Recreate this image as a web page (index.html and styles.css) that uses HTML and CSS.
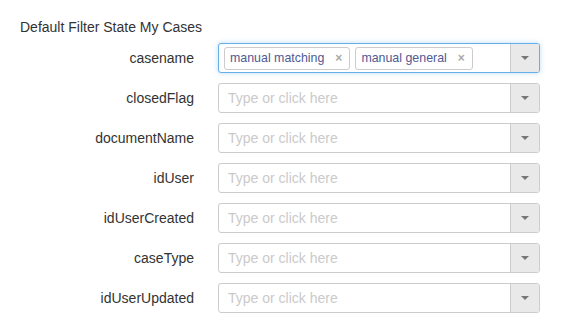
FILE: index.html
```
<!DOCTYPE html>
<html>
<head>
<meta charset="utf-8">
<link rel="stylesheet" href="styles.css">
</head>
<body>
<div class="page">
  <div class="title">Default Filter State My Cases</div>
  <div class="form">
    <div class="row">
      <label class="label">casename</label>
      <div class="select focused">
        <div class="field">
          <span class="tag">manual matching<span class="x">×</span></span>
          <span class="tag">manual general<span class="x">×</span></span>
        </div>
        <div class="btn"><span class="caret"></span></div>
      </div>
    </div>
    <div class="row">
      <label class="label">closedFlag</label>
      <div class="select"><div class="field"><span class="ph">Type or click here</span></div><div class="btn"><span class="caret"></span></div></div>
    </div>
    <div class="row">
      <label class="label">documentName</label>
      <div class="select"><div class="field"><span class="ph">Type or click here</span></div><div class="btn"><span class="caret"></span></div></div>
    </div>
    <div class="row">
      <label class="label">idUser</label>
      <div class="select"><div class="field"><span class="ph">Type or click here</span></div><div class="btn"><span class="caret"></span></div></div>
    </div>
    <div class="row">
      <label class="label">idUserCreated</label>
      <div class="select"><div class="field"><span class="ph">Type or click here</span></div><div class="btn"><span class="caret"></span></div></div>
    </div>
    <div class="row">
      <label class="label">caseType</label>
      <div class="select"><div class="field"><span class="ph">Type or click here</span></div><div class="btn"><span class="caret"></span></div></div>
    </div>
    <div class="row">
      <label class="label">idUserUpdated</label>
      <div class="select"><div class="field"><span class="ph">Type or click here</span></div><div class="btn"><span class="caret"></span></div></div>
    </div>
  </div>
</div>
</body>
</html>
```
FILE: styles.css
```
html, body { margin: 0; padding: 0; background: #fff; }
body { font-family: "Liberation Sans", Arial, sans-serif; color: #333; font-size: 14px; }
.page { padding: 17px 0 0 20px; }
.title { line-height: 20px; height: 20px; }
.form { margin-top: 6px; display: flex; flex-direction: column; gap: 10px; }
.row { display: flex; align-items: center; height: 30px; }
.label { width: 174px; text-align: right; margin-right: 24px; }
.select { width: 322px; height: 30px; box-sizing: border-box; border: 1px solid #ccc; border-radius: 3px; display: flex; background: #fff; }
.select.focused { border-color: #66afe9; box-shadow: 0 0 5px rgba(102,175,233,0.45); }
.field { flex: 1; display: flex; align-items: center; padding-left: 5px; gap: 5px; }
.ph { color: #cacaca; padding-left: 4px; }
.tag { display: inline-flex; align-items: center; height: 23px; box-sizing: border-box; border: 1px solid #ccc; border-radius: 3px; padding: 0 7px 0 5px; color: #4e5a94; font-size: 12.4px; }
.x { color: #aaa; margin-left: 11px; font-size: 12px; font-weight: bold; }
.btn { width: 28px; border-left: 1px solid #ccc; background: #e9e9e9; display: flex; align-items: center; justify-content: center; border-radius: 0 2px 2px 0; }
.caret { width: 0; height: 0; border-left: 4px solid transparent; border-right: 4px solid transparent; border-top: 4px solid #777; }
```
